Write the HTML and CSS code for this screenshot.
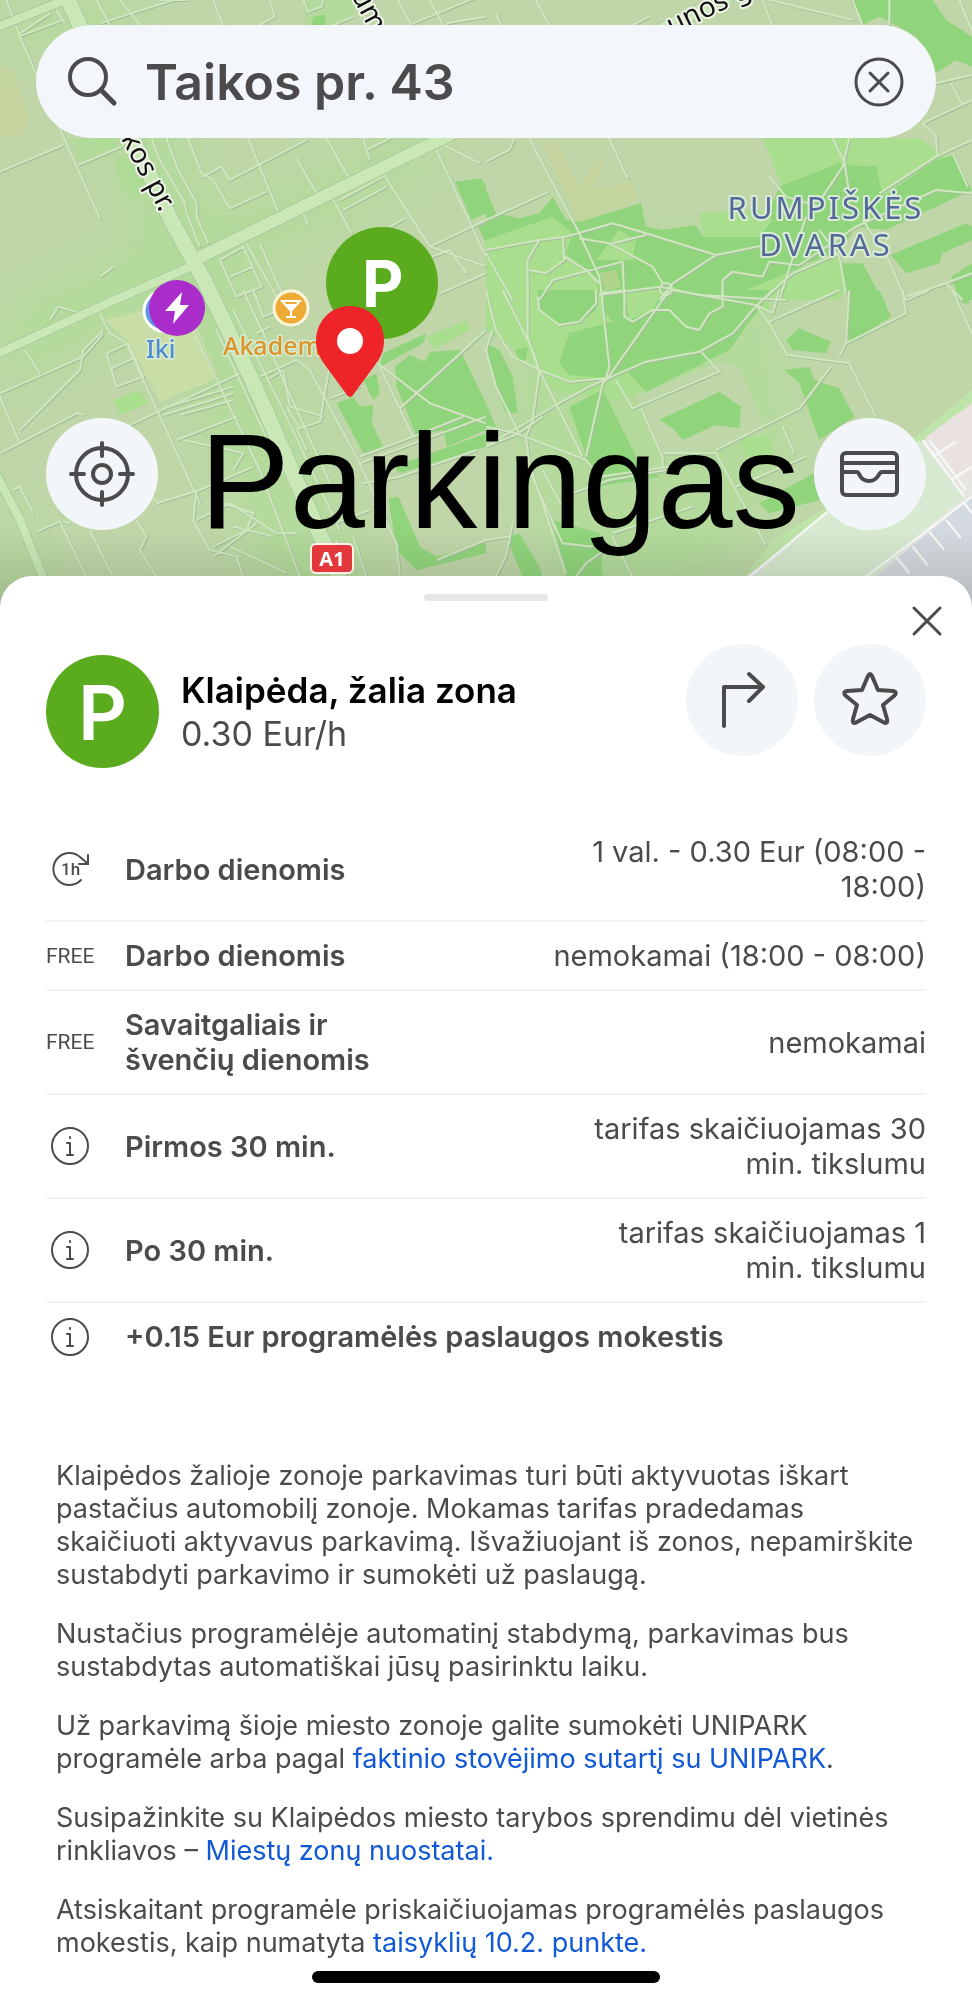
FILE: index.html
```html
<!DOCTYPE html>
<html lang="lt">
<head>
<meta charset="utf-8">
<meta name="viewport" content="width=device-width, initial-scale=1">
<title>Parkingas</title>
<link rel="stylesheet" href="styles.css">
</head>
<body>
<main class="screen">
  <section class="map" aria-label="Žemėlapis">
    <svg class="map-canvas" viewBox="0 0 972 610" preserveAspectRatio="xMidYMin slice" aria-hidden="true">
      <defs>
        <linearGradient id="shade" x1="0" y1="0" x2="0" y2="1">
          <stop offset="0" stop-color="#3c4a34" stop-opacity="0"/>
          <stop offset="1" stop-color="#3c4a34" stop-opacity=".22"/>
        </linearGradient>
        <filter id="soft"><feGaussianBlur stdDeviation="24"/></filter>
      </defs>
      <rect width="972" height="610" fill="#c0d6a9"/>
      <g fill="#b0dc98" filter="url(#soft)" opacity=".8">
        <path d="M60 0L130 0 230 250 390 610 270 610 150 300Z"/>
        <path d="M0 300L430 120 430 180 0 400Z"/>
        <path d="M0 20L120-10 120 30 0 60Z"/>
        <path d="M0 460L60 610 0 610Z"/>
        <path d="M560 220L760 260 800 450 700 610 560 610 500 400Z"/>
      </g>

      <!-- parks, north-west -->
      <g transform="scale(.3333)">
        <path class="lawn" opacity=".5" d="M205 415H345L350 440 240 490ZM345 480L400 460 440 560 400 600 360 560ZM910 0H1060V40L1000 90 920 80Z"/>
        <path class="wood" d="M1365 545L1445 535 1458 560V640L1415 660ZM1435 680L1458 670V730ZM940 50L975 45V75H935Z"/>
        <path class="sand" opacity=".6" d="M0 200L40 210 90 360 60 410H0Z"/>
      </g>
      <!-- parks, north-east -->
      <g transform="translate(486 0) scale(.3333)">
        <path class="wood" d="M1095 0H1340L1380 60 1458 110V200L1410 180 1350 220 1290 110 1240 80 1180 50 1130 75Z"/>
        <path class="lawn" d="M830 415H1300L1380 470 1190 600 1000 600 890 560Z"/>
        <path class="wood" d="M0 570L30 640 100 655 160 640 200 590 240 660 280 665 465 610 480 680 530 690 630 675 650 710 820 710 880 560 1060 490 1140 500 1170 495 1190 590 1350 480 1400 465 1458 570 1200 690 1110 680 1060 760 960 790 910 830 880 900H0Z"/>
        <path class="lawn" d="M0 720L200 650 260 700 240 760 330 840 340 900H0ZM640 640L820 630 860 660 820 710H650ZM780 870L1050 760 1080 860 1060 900H780ZM400 690L450 720 440 780 330 780Z"/>
        <path class="base" d="M1060 760L1130 780 1180 900H1100ZM1130 760L1200 700 1458 600V660L1260 750Z"/>
        <path class="wood" d="M1060 790L1130 790 1190 900H1090ZM1215 765L1440 670 1458 680V720L1370 760 1360 790 1260 820ZM1395 830L1458 790V900H1420Z"/>
        <path class="sand" opacity=".6" d="M170 430L210 420 280 560 330 480 360 490 320 570 440 545 455 600 280 670ZM340 820L390 810 405 860 360 875Z"/>
      </g>
      <!-- parks, south-west -->
      <g transform="translate(0 290) scale(.3333)">
        <path class="field" d="M310 90L460 55 590 110 650 250 640 270 480 335 380 150Z"/>
        <path class="lawn" d="M340 330L420 300 445 340 360 375ZM1280 140L1400 90 1410 120 1300 180Z"/>
        <path class="wood" d="M1150 190L1280 130 1270 160 1140 230ZM1185 230L1230 195 1275 215 1290 185 1380 180 1458 340V420L1340 470 1330 420 1250 440 1190 290ZM1010 340L1060 320 1080 350 1120 345 1115 400 1150 470 1090 490ZM1090 270L1130 250 1140 310 1120 330ZM1165 625L1195 620 1260 770 1310 800 1458 760V790L1250 840 1190 780ZM1180 530L1458 430V470L1200 550Z"/>
      </g>
      <!-- parks, south-east -->
      <g transform="translate(486 290) scale(.3333)">
        <path class="lawn" d="M0 0H850V60L780 90 720 180 640 230 400 330 200 300 120 200 0 120Z"/>
        <path class="wood" d="M360 0H860L730 180 480 305 420 240 370 265 250 255 220 220 250 130 380 95 350 60ZM155 0H340L330 60 280 100 220 105 160 60Z"/>
        <path class="lawn" d="M415 0H530L500 60 430 90Z"/>
        <path class="base" d="M450 320L700 215 760 230 840 420 700 480 520 490Z"/>
        <path class="wood" d="M250 350L350 300 450 500 520 560 330 590 300 500ZM520 390L700 305 765 350 760 415 690 405 590 450 560 415ZM900 150L940 115 1035 155 1020 190 920 180ZM1090 0H1180L1215 80 1090 160 1080 80ZM895 240L970 230 985 270 1060 295 1105 380 1000 450 940 280ZM820 640L985 550 1000 630 850 670ZM0 160L40 180 80 260 95 370 60 370 20 260ZM85 180L125 170 120 210 100 215ZM60 740L100 730 160 830 170 860H110ZM200 690L340 730 350 860H240ZM0 340L30 410H0ZM1410 0H1440L1450 40H1430Z"/>
        <path class="lawn" d="M765 440H850L860 500 780 500Z"/>
        <path class="verge" d="M700 960L860 750 1060 630 1290 440 1458 300V350L1310 450 1050 650 780 860Z"/>
        <path fill="#e6e6e3" d="M780 860L1458 340V960H700Z"/>
        <path fill="#d7ead1" d="M760 900L1050 640 1300 450 1435 620 1160 860 1100 960H720Z"/>
        <path fill="#d4d8df" d="M1120 900L1458 620V960H1100Z"/>
        <path fill="#e9e2df" d="M1320 440L1458 340V560L1420 590Z"/>
      </g>

      <!-- small streets -->
      <g class="street">
        <g transform="scale(.3333)">
          <path d="M20 0L60 110 160 340 300 655M0 515L190 435M235 495L365 440M55 110L190 60M60 100L150 40M170 30L195 70M290 0L330 75M360 0L420 75M640 0L670 75M810 0L825 50 780 75M300 70L520 0M910 0L925 35 965 20 970 0M1000 75L1060 50M1060 0L1110 75M1195 0L1235 75M1290 0L1330 75M1240 70L1458 -20M1340 70L1458 50"/>
          <path d="M455 415L480 480 555 610 560 640 600 740M500 415L535 510 590 610 590 650 625 730M565 415L605 520 640 540 690 625 800 575M610 530L665 500 690 540 920 420M745 415L835 635M890 475L950 580M980 415L1045 530M1090 415L1110 480M1100 450L1170 415M990 580L1055 700M1030 630L1160 560M1020 600L1150 530M1150 520L1290 740M1310 450L1458 770M1320 430L1440 490M910 640L925 675M1170 680L1215 655M1290 740L1458 660M1270 780L1350 750 1400 820M1290 740L1458 800M1320 880L1458 820M660 780L730 740 785 860 710 890ZM690 830L760 800M740 730L830 890M780 730L850 890M300 830L340 800M480 0L560 0"/>
        </g>
        <g transform="translate(486 0) scale(.3333)">
          <path d="M30 40L45 75M150 0L190 75M440 75L490 50M830 0L860 75M1100 0L1130 75M1210 0V75M850 0L1100 60M130 415L280 700 340 830 350 900M370 415L425 535M0 485L70 450 85 415M0 660L190 575M0 750L160 720 240 710 380 670 480 700 690 765 840 735M280 715L370 730 500 800 530 850M380 730L480 705M125 900V780L160 720M230 710L235 780 180 820 130 810M235 770L300 810 340 850M160 900L200 840 410 785 415 900M340 885L520 860 640 885 900 900M690 765L560 850 520 900M710 890V840L740 815 830 830 850 785 940 795 1110 680 1350 570 1458 580M1040 415L1075 485 1090 580M1090 415L1070 500 1010 590M960 650L880 900M850 530L900 590 1000 620M1000 690L1060 770 1080 880M830 900L920 820 1060 760M1130 660L1200 760 1260 900M1180 580L1350 470 1458 420M1310 370L1350 410 1355 470M1400 460L1445 560M1310 370L1458 300M1395 250L1430 315M1350 250L1458 225M1260 890L1380 850 1430 900M1380 850L1458 820M1420 0L1458 90M0 760L80 900"/>
          <circle cx="540" cy="867" r="18"/>
        </g>
        <g transform="translate(0 290) scale(.3333)">
          <path d="M150 90L175 50 240 70M300 70L330 130 380 160 440 290 600 640M310 120L250 180 240 240 60 420M0 310L250 200 310 130M75 180L120 250M0 320L60 460M0 490L230 370 250 375M320 190L385 160 430 260 350 290ZM335 235L400 205M380 410L720 250M490 355L700 290M490 375L700 310M540 375L700 330M570 100L780 540 900 860M650 120L780 400 940 730M700 60L860 380 1020 720M730 0L800 150 850 270 1000 600M770 130L810 110M760 0L790 80 840 60M780 260L890 210 930 240 1080 520 1190 760 1200 860M800 270L850 240 870 350 970 380M860 350L900 415 960 395 990 220M890 415L920 480M1120 210L1290 340 1458 400M1140 230L1240 440M1200 355L1458 120M990 325L1080 290M1080 500L1240 440 1390 380M1080 520L1458 380M530 450L710 380M550 450L730 490 700 540M470 640L600 600 760 530M410 690L440 740 420 780 470 860M420 600L480 640M590 600L580 690 630 780 710 800 730 860M590 690L690 640 830 730 890 730M640 630L760 670 740 720 640 770M640 800L770 700M690 770L860 850M700 710L820 740M1000 700L1110 660M110 725L180 695 260 860M190 695L210 700M270 720L340 860M40 600L60 590 100 670M1090 580L1200 560 1430 480M1310 810L1458 750M1010 750L1040 860M1060 740L1100 860"/>
        </g>
        <g transform="translate(486 290) scale(.3333)">
          <path d="M0 0L30 120 80 200 160 240 250 275 360 265 370 230 345 0M50 0L140 180 160 240 290 500M125 0V140L160 250 140 390 120 440 130 520 240 850M155 20L160 60 220 105 280 95 330 40V0M415 0V80L440 95 500 60 550 60 600 110 640 120 670 70 710 50V0M550 0L365 265M560 0L810 45 860 70M860 0L800 60 740 130 640 185 480 215 365 265 310 290 210 345 0 470M365 265L350 280 300 500M390 270L440 355 700 245 645 185M465 355L530 500V530M530 490H690L840 765M690 480L940 355 1035 230M0 410L90 430 300 510 340 560 620 520M90 435L170 380M0 180L30 290 100 430M0 470L100 430M170 540L230 650M130 540L230 760 320 770M80 700L60 800 30 860M230 620L370 570 540 540M370 770L300 820 270 860M380 740L440 860M380 730L620 650M810 45L850 100 905 195 1090 220 1170 380M850 95L1060 0M880 0L860 70M1090 0L1080 160 1060 200M1080 160L1260 70 1250 0M1260 30L1330 0M1400 0L1458 130M750 590L960 500M890 410L925 490M0 750L70 740M345 10L420 0M20 120L0 180"/>
        </g>
      </g>
      <g class="rail" transform="translate(486 290) scale(.3333)">
        <path d="M790 860L1025 665M1310 450L1435 620M1140 860L1458 620M1340 500L1410 455M1395 570L1458 530M1330 450L1440 600M1230 800L1270 850M1280 770L1325 825M1330 725L1375 780M1380 690L1425 745M1435 640L1458 670"/>
      </g>

      <!-- avenues -->
      <g class="casing">
        <path class="w8" d="M-5 28L75-4"/>
        <path class="w8" d="M-5 472L20 520 52 600"/>
        <path class="w8" d="M-5 355L110 302 190 267"/>
        <path class="w12" d="M190 262L447 136 640 40 760-20"/>
        <path class="w15" d="M66-5L100 70 170 218 205 282 252 380 340 580 352 610"/>
      </g>
      <g class="avenue">
        <path class="w8" d="M-5 28L75-4"/>
        <path class="w8" d="M-5 472L20 520 52 600"/>
        <path class="w8" d="M-5 355L110 302 190 267"/>
        <path class="w12" d="M190 262L447 136 640 40 760-20"/>
        <path class="w15" d="M66-5L100 70 170 218 205 282 252 380 340 580 352 610"/>
      </g>
      <rect y="530" width="972" height="80" fill="url(#shade)"/>

      <!-- labels -->
      <g class="road-name">
        <text transform="translate(110 118) rotate(62)">aikos pr.</text>
        <text transform="translate(351 -5) rotate(62)">um</text>
        <text transform="translate(672 35) rotate(-26)">unos g.</text>
      </g>
      <g class="district" text-anchor="middle">
        <text x="826" y="219">RUMPIŠKĖS</text>
        <text x="826" y="256">DVARAS</text>
      </g>
      <circle cx="164" cy="311" r="20" fill="#5f95ea" stroke="#fff" stroke-width="3"/>
      <circle cx="177" cy="308" r="28" fill="#a92ccb"/>
      <path d="M182 292L165 311H175L173 324 189 305H180Z" fill="#fff"/>
      <text class="poi shop" x="146" y="358">Iki</text>
      <circle cx="291" cy="308" r="17" fill="#eeac36" stroke="#fff6dc" stroke-width="3"/>
      <path d="M282 301H300L291 311ZM291 310V317M286 317H296" fill="none" stroke="#fff" stroke-width="2"/>
      <path d="M285 304H297L291 311Z" fill="#fff"/>
      <text class="poi food" x="223" y="355">Akadem</text>
      <circle cx="382" cy="283" r="56" fill="#5bab1f"/>
      <text class="pin-letter" x="362" y="307">P</text>
      <path d="M350 306C331 306 316 321 316 341 316 351 320 358 325 365L347 395Q350 399 353 395L375 365C380 358 384 351 384 341 384 321 369 306 350 306Z" fill="#ee2429"/>
      <circle cx="350" cy="341" r="13" fill="#fff"/>
      <rect x="311" y="544" width="42" height="29" rx="5" fill="#e2373b" stroke="#fff0ea" stroke-width="2"/>
      <text class="shield" x="332" y="566" text-anchor="middle">A1</text>
    </svg>

    <form class="search" role="search">
      <svg class="icon" width="50" height="50" viewBox="0 0 50 50" aria-hidden="true"><circle cx="20" cy="20" r="18"/><path d="M33 33L46 46" stroke-width="5"/></svg>
      <input class="search-input" type="text" aria-label="Paieška" value="Taikos pr. 43">
      <button class="plain" type="button" aria-label="Išvalyti"><svg class="icon" width="50" height="50" viewBox="0 0 50 50" aria-hidden="true"><circle cx="25" cy="25" r="23" stroke-width="3"/><path d="M16 16L34 34M34 16L16 34" stroke-width="3"/></svg></button>
    </form>

    <div class="map-tools">
      <button class="round" type="button" aria-label="Mano vieta"><svg class="icon" width="66" height="66" viewBox="0 0 66 66" aria-hidden="true"><circle cx="33" cy="33" r="26"/><circle cx="33" cy="33" r="9"/><path d="M33 2V15M33 51V64M2 33H15M51 33H64"/></svg></button>
      <h1 class="brand">Parkingas</h1>
      <button class="round" type="button" aria-label="Piniginė"><svg class="icon" width="62" height="50" viewBox="0 0 62 50" aria-hidden="true"><rect x="3" y="4" width="55" height="42" rx="4"/><path d="M3 14H58M3 23H18C21 23 20 32 30 32S39 23 43 23H58"/></svg></button>
    </div>
  </section>

  <section class="sheet">
    <div class="handle"></div>
    <div class="close-row">
      <button class="plain close" type="button" aria-label="Uždaryti"><svg class="icon" width="32" height="32" viewBox="0 0 32 32" aria-hidden="true"><path d="M3 3L29 29M29 3L3 29" stroke-width="3"/></svg></button>
    </div>

    <header class="zone">
      <div class="zone-id">
        <span class="badge">P</span>
        <div class="zone-text">
          <h2 class="zone-name">Klaipėda, žalia zona</h2>
          <p class="zone-price">0.30 Eur/h</p>
        </div>
      </div>
      <div class="zone-actions">
        <button class="round" type="button" aria-label="Maršrutas"><svg class="icon" width="56" height="60" viewBox="0 0 56 60" aria-hidden="true"><path d="M10 56V17H49M35 4L49 17 35 31"/></svg></button>
        <button class="round" type="button" aria-label="Įsiminti"><svg class="icon" width="60" height="60" viewBox="0 0 60 60" aria-hidden="true"><path d="M28 6Q30 2 32 6L38 20 53 21Q58 22 54 26L43 35 47 49Q48 55 43 52L30 45 17 52Q12 55 13 49L17 35 6 26Q2 22 7 21L22 20Z"/></svg></button>
      </div>
    </header>

    <table class="rates">
      <tbody>
        <tr>
          <td class="mark"><svg class="icon thin" width="40" height="40" viewBox="0 0 40 40" aria-label="1 valanda"><path d="M31 31A16 16 0 1 1 30 8L37 14M38 6V15H29" stroke-linejoin="miter"/><text class="hour" x="11" y="26">1h</text></svg></td>
          <th scope="row">Darbo dienomis</th>
          <td class="value">1 val. - 0.30 Eur (08:00 - 18:00)</td>
        </tr>
        <tr>
          <td class="mark">FREE</td>
          <th scope="row">Darbo dienomis</th>
          <td class="value">nemokamai (18:00 - 08:00)</td>
        </tr>
        <tr>
          <td class="mark">FREE</td>
          <th scope="row">Savaitgaliais ir švenčių&nbsp;dienomis</th>
          <td class="value">nemokamai</td>
        </tr>
        <tr>
          <td class="mark"><svg class="icon thin" width="40" height="40" viewBox="0 0 40 40" aria-hidden="true"><circle cx="20" cy="20" r="18"/><path d="M17 17H20V29M17 29H23M20 11V12"/></svg></td>
          <th scope="row">Pirmos 30 min.</th>
          <td class="value">tarifas skaičiuojamas 30 min.&nbsp;tikslumu</td>
        </tr>
        <tr>
          <td class="mark"><svg class="icon thin" width="40" height="40" viewBox="0 0 40 40" aria-hidden="true"><circle cx="20" cy="20" r="18"/><path d="M17 17H20V29M17 29H23M20 11V12"/></svg></td>
          <th scope="row">Po 30 min.</th>
          <td class="value">tarifas skaičiuojamas 1 min.&nbsp;tikslumu</td>
        </tr>
        <tr>
          <td class="mark"><svg class="icon thin" width="40" height="40" viewBox="0 0 40 40" aria-hidden="true"><circle cx="20" cy="20" r="18"/><path d="M17 17H20V29M17 29H23M20 11V12"/></svg></td>
          <th scope="row" colspan="2">+0.15 Eur programėlės paslaugos mokestis</th>
        </tr>
      </tbody>
    </table>

    <div class="notes">
      <p>Klaipėdos žalioje zonoje parkavimas turi būti aktyvuotas iškart pastačius automobilį zonoje. Mokamas tarifas pradedamas skaičiuoti aktyvavus parkavimą. Išvažiuojant iš zonos, nepamirškite sustabdyti parkavimo ir sumokėti už paslaugą.</p>
      <p>Nustačius programėlėje automatinį stabdymą, parkavimas bus sustabdytas automatiškai jūsų pasirinktu laiku.</p>
      <p>Už parkavimą šioje miesto zonoje galite sumokėti UNIPARK programėle arba pagal <a href="#sutartis">faktinio stovėjimo sutartį su UNIPARK</a>.</p>
      <p>Susipažinkite su Klaipėdos miesto tarybos sprendimu dėl vietinės rinkliavos – <a href="#nuostatai">Miestų zonų nuostatai.</a></p>
      <p>Atsiskaitant programėle priskaičiuojamas programėlės paslaugos mokestis, kaip numatyta <a href="#taisykles">taisyklių 10.2. punkte.</a></p>
    </div>
    <div class="home-bar"></div>
  </section>
</main>
</body>
</html>
```
FILE: styles.css
```css
* { box-sizing: border-box; }
body {
  margin: 0;
  background: #fff;
  color: #4b4b4d;
  font-family: Inter, "Liberation Sans", sans-serif;
}
h1, h2, p { margin: 0; }
button, input { font: inherit; color: inherit; border: 0; padding: 0; background: none; }
button { display: flex; align-items: center; justify-content: center; cursor: pointer; }

.icon { display: block; flex: none; fill: none; stroke: #4b4b4d; stroke-width: 4; stroke-linecap: round; stroke-linejoin: round; }
.icon.thin { stroke-width: 2; }
.hour { font: 500 17px Roboto, sans-serif; fill: #4b4b4d; stroke: none; }

/* Map */
.map { position: relative; padding: 25px 36px 72px; overflow: hidden; }
.map-canvas { position: absolute; inset: 0; width: 100%; height: 100%; }
.lawn { fill: #a8de8e; }
.wood { fill: #90d57b; }
.base { fill: #bfd7a8; }
.field { fill: #c9dea6; }
.sand { fill: #c8d299; }
.verge { fill: #bfe4a9; }
.street { fill: none; stroke: #cfe6bf; stroke-width: 6; stroke-linejoin: round; filter: drop-shadow(1px 1px 0 #a3bf9a); }
.rail { fill: none; stroke: #f5f8f5; stroke-width: 7; }
.casing { fill: none; stroke: #a9cba0; }
.avenue { fill: none; stroke: #c9e8b6; }
.w8 { stroke-width: 8px; }
.w12 { stroke-width: 12px; }
.w15 { stroke-width: 15px; }
.casing .w8 { stroke-width: 10px; }
.casing .w12 { stroke-width: 14px; }
.casing .w15 { stroke-width: 17px; }
.map-canvas text { font-family: "Noto Sans", sans-serif; paint-order: stroke; stroke-linejoin: round; }
.road-name { font-size: 28px; fill: #111; stroke: #eef4e8; stroke-width: 4px; }
.district { font-size: 31px; letter-spacing: 3px; fill: #52699a; stroke: #dcebd6; stroke-width: 4px; }
.poi { font-size: 25px; font-weight: 500; stroke: #dcebd0; stroke-width: 3px; }
.shop { fill: #4a8fd6; }
.food { fill: #d8962c; }
.map-canvas .pin-letter { font-family: Inter, sans-serif; font-size: 64px; font-weight: 700; fill: #fff; }
.shield { font-size: 20px; font-weight: 700; fill: #fff; }

.search {
  position: relative;
  display: flex;
  align-items: center;
  height: 113px;
  padding: 0 32px;
  border-radius: 57px;
  background: #f3f6fa;
}
.search-input { flex: 1; min-width: 0; margin: 0 27px; font-size: 50px; font-weight: 600; outline: 0; }

.map-tools { position: relative; display: flex; align-items: flex-start; gap: 14px; margin-top: 280px; padding: 0 10px; }
.round { flex: none; width: 112px; height: 112px; border-radius: 50%; background: #f3f6f9; }
.brand { flex: 1; padding-top: 8px; text-align: right; font: 135px/112px "Liberation Sans", sans-serif; color: #000; white-space: nowrap; }

/* Sheet */
.sheet { position: relative; margin-top: -34px; border-radius: 32px 32px 0 0; background: #fff; padding: 18px 46px; }
.handle { width: 124px; height: 7px; margin: 0 auto; border-radius: 4px; background: #e6e6e6; }
.close-row { display: flex; justify-content: flex-end; margin-right: -21px; }
.close { width: 40px; height: 40px; }

.zone { display: flex; justify-content: space-between; align-items: flex-start; margin-top: 3px; }
.zone-id { display: flex; align-items: center; gap: 22px; padding-top: 11px; }
.badge { display: grid; place-items: center; width: 113px; height: 113px; border-radius: 50%; background: #5bab1f; color: #fff; font-size: 76px; font-weight: 600; line-height: 1; }
.zone-name { color: #000; font-size: 35px; font-weight: 600; line-height: 43px; }
.zone-price { font-size: 34px; line-height: 43px; }
.zone-actions { display: flex; gap: 16px; }

.rates { width: 100%; margin-top: 50px; border-collapse: collapse; table-layout: fixed; font-size: 29px; line-height: 35px; }
.rates td, .rates th { padding: 16px 0; border-bottom: 2px solid #f1f1f2; vertical-align: middle; }
.rates tr:last-child td, .rates tr:last-child th { border-bottom: 0; }
.rates .mark { width: 79px; padding: 0 32px 0 0; font-family: Roboto, sans-serif; font-size: 21px; line-height: 26px; text-align: center; white-space: nowrap; }
.mark .icon { margin: 0 auto; }
.rates th { padding-right: 100px; font-weight: 600; text-align: left; }
.rates th[colspan] { padding-right: 0; }
.rates .value { width: 385px; text-align: right; }

.notes { display: grid; gap: 26px; margin-top: 89px; padding: 0 10px; font-size: 27px; line-height: 33px; }
.notes a { color: #1259d6; text-decoration: none; }
.home-bar { width: 348px; height: 12px; margin: 12px auto 0; border-radius: 6px; background: #000; }
```
